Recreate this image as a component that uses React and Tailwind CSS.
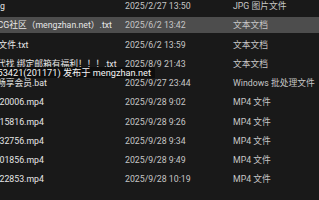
import React from "react";

const rows = [
  { name: "g", ml: "ml-[0px]", date: "2025/2/27 13:50", type: "JPG 图片文件" },
  { name: "CG社区（mengzhan.net）.txt", ml: "ml-[-2.5px]", date: "2025/6/2 13:42", type: "文本文档", sel: true },
  { name: "文件.txt", ml: "ml-[-1.5px]", date: "2025/6/2 13:59", type: "文本文档" },
  { name: "代找 绑定邮箱有福利！！！.txt", ml: "ml-[-3px]", date: "2025/8/9 21:43", type: "文本文档" },
  { name: "畅享会员.bat", ml: "ml-[-3px]", date: "2025/9/27 23:44", type: "Windows 批处理文件" },
  { name: "20006.mp4", ml: "ml-[-0.5px]", date: "2025/9/28 9:02", type: "MP4 文件" },
  { name: "15816.mp4", ml: "ml-[-0.5px]", date: "2025/9/28 9:26", type: "MP4 文件" },
  { name: "32756.mp4", ml: "ml-[-0.5px]", date: "2025/9/28 9:34", type: "MP4 文件" },
  { name: "01856.mp4", ml: "ml-[-0.5px]", date: "2025/9/28 9:49", type: "MP4 文件" },
  { name: "22853.mp4", ml: "ml-[-0.5px]", date: "2025/9/28 10:19", type: "MP4 文件" },
];

export default function App() {
  return (
    <div
      className="relative w-[319px] h-[200px] overflow-hidden bg-[#191919] text-[8.75px] leading-[10px]"
      style={{ fontFamily: 'Roboto, "Noto Sans CJK SC", sans-serif' }}
    >
      <div className="flex flex-col mt-[-3.5px]">
        {rows.map((r, i) => (
          <div key={i} className="h-[19.25px] flex items-center">
            <div
              className={
                "w-full h-[16px] flex items-center whitespace-nowrap " +
                (r.sel ? "bg-[#4d4d4d]" : "")
              }
            >
              <div className="w-[125px] shrink-0 overflow-hidden">
                <span className={"block text-[#e6e6e6] " + r.ml}>{r.name}</span>
              </div>
              <div className="w-[108px] shrink-0 text-[#c6c6c6]">{r.date}</div>
              <div className="flex-1 text-[#c6c6c6]">{r.type}</div>
            </div>
          </div>
        ))}
      </div>
      <div className="absolute top-[67px] right-[164px] h-[11px] flex items-center bg-[#0e0e0e] pl-[4px] pr-[4px] whitespace-nowrap text-[9.2px] leading-[11px] text-[#f4f4f4]">
        53421(201171) 发布于 mengzhan.net
      </div>
    </div>
  );
}
